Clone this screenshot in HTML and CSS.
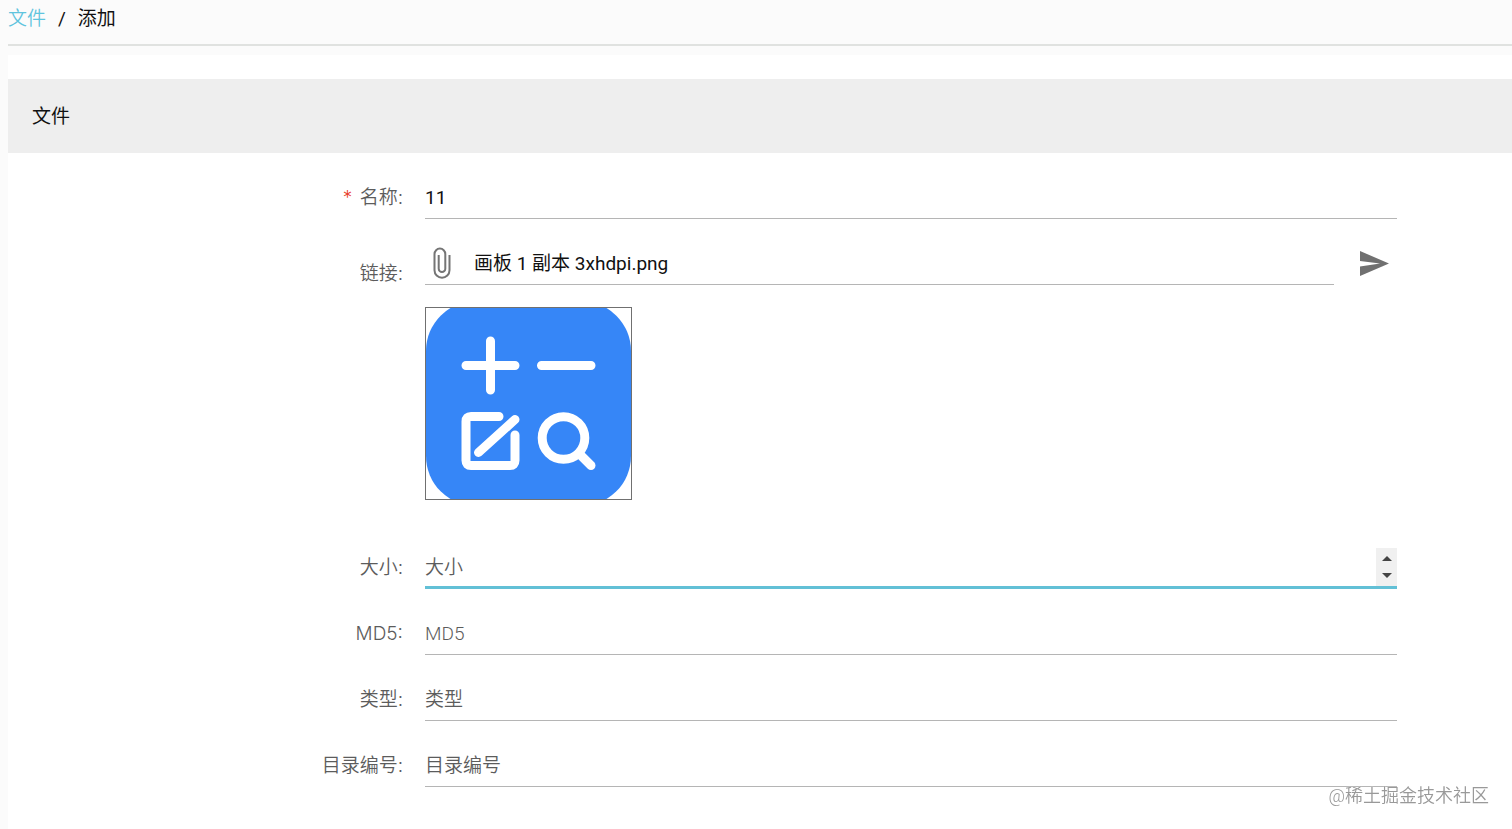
FILE: index.html
```html
<!DOCTYPE html>
<html lang="zh-CN">
<head>
<meta charset="utf-8">
<title>添加文件</title>
<link rel="stylesheet" href="styles.css">
</head>
<body>
<nav class="breadcrumb" aria-label="面包屑">
  <a href="#" class="breadcrumb-link">文件</a>
  <span>/</span>
  <span>添加</span>
</nav>
<main class="card">
  <h1 class="card-title">文件</h1>
  <form class="form">
    <div class="row">
      <label class="label" for="name"><span class="required">*</span> 名称:</label>
      <input class="input" id="name" type="text" value="11">
    </div>
    <div class="row row-file">
      <label class="label" for="link">链接:</label>
      <div>
        <div class="upload">
          <div class="file-field">
            <button class="icon-button" type="button" aria-label="选择文件">
              <svg class="clip" viewBox="0 0 18 32" fill="none" stroke="#757575" stroke-width="2" stroke-linecap="butt"><path d="M16.5 8v15.2a7.5 7.5 0 0 1-15 0V7a5.4 5.4 0 0 1 10.8 0v14.700a3.300 3.300 0 0 1-6.600 0V8"/></svg>
            </button>
            <input class="file-name" id="link" type="text" value="画板 1 副本 3xhdpi.png" readonly>
          </div>
          <button class="icon-button send" type="button" aria-label="上传">
            <svg class="plane" viewBox="0 0 29 25" fill="#707070"><path d="M0 0L29 12.500L0 25V15.500L20 12.500L0 10Z"/></svg>
          </button>
        </div>
        <svg class="preview" viewBox="0 0 205 191" preserveAspectRatio="xMidYMid slice" role="img" aria-label="预览">
          <rect x="0" y="-7" width="205" height="205" rx="50" fill="#3686f7"/>
          <g fill="none" stroke="#fff" stroke-width="9" stroke-linecap="round" stroke-linejoin="round">
            <path d="M40 57.500H89M64.500 33V82M115.500 57.500H165"/>
            <path d="M73 108.500H45Q40 108.500 40 113.500V152.500Q40 157.500 45 157.500H84Q89 157.500 89 152.500V127M52.500 144.500L89 111.500"/>
            <circle cx="137.500" cy="130" r="21.300"/>
            <path d="M153 145.500L165 157.500"/>
          </g>
        </svg>
      </div>
    </div>
    <div class="row">
      <label class="label" for="size">大小:</label>
      <div class="number-field">
        <input class="number-input" id="size" type="number" placeholder="大小">
        <div class="spinner">
          <button class="step" type="button" aria-label="增加"><svg class="arrow" viewBox="0 0 10 5"><path d="M0 5L5 0L10 5Z"/></svg></button>
          <button class="step" type="button" aria-label="减少"><svg class="arrow" viewBox="0 0 10 5"><path d="M0 0L5 5L10 0Z"/></svg></button>
        </div>
      </div>
    </div>
    <div class="row">
      <label class="label" for="md5">MD5:</label>
      <input class="input" id="md5" type="text" placeholder="MD5">
    </div>
    <div class="row">
      <label class="label" for="type">类型:</label>
      <input class="input" id="type" type="text" placeholder="类型">
    </div>
    <div class="row">
      <label class="label" for="catalog">目录编号:</label>
      <input class="input" id="catalog" type="text" placeholder="目录编号">
    </div>
  </form>
</main>
<div class="watermark">@稀土掘金技术社区</div>
</body>
</html>
```
FILE: styles.css
```css
* {
  box-sizing: border-box;
}

body {
  margin: 0;
  padding-left: 8px;
  background: #fbfbfb;
  color: #111;
  font-family: Roboto, "Noto Sans CJK SC", sans-serif;
  font-size: 19px;
  line-height: 28px;
}

input,
button {
  margin: 0;
  padding: 0;
  border: 0;
  border-radius: 0;
  outline: 0;
  background: none;
  color: inherit;
  font: inherit;
}

.breadcrumb {
  display: flex;
  gap: 12px;
  padding: 5px 0 11px;
  border-bottom: 2px solid #e0e2e0;
}

.breadcrumb-link {
  color: #5fc4de;
  font-weight: 350;
  text-decoration: none;
}

.card {
  margin-top: 9px;
  padding: 24px 0 42px;
  background: #fff;
}

.card-title {
  margin: 0;
  padding: 24px 24px 22px;
  background: #eee;
  font-size: 19px;
  font-weight: 400;
  line-height: 28px;
}

.form {
  display: flex;
  flex-direction: column;
  gap: 22px;
  padding: 22px 115px 0 0;
}

.row {
  display: grid;
  grid-template-columns: 395px minmax(0, 1fr);
  column-gap: 22px;
}

.row-file {
  padding-bottom: 23px;
}

.label {
  padding-top: 9px;
  color: #5c5c5c;
  font-family: Inter, "Noto Sans CJK SC", sans-serif;
  font-weight: 350;
  text-align: right;
}

.row-file .label {
  padding-top: 19px;
}

.required {
  margin-right: 2px;
  color: #e8402c;
}

.input,
.number-field,
.file-field {
  width: 100%;
  height: 44px;
  border-bottom: 1px solid #b5b5b5;
}

.input,
.number-input {
  padding-top: 2px;
}

::placeholder {
  color: #5c5c5c;
  font-weight: 350;
  opacity: 1;
}

.upload {
  display: flex;
  gap: 23px;
}

.file-field {
  display: flex;
  flex: 1;
  align-items: center;
}

.icon-button {
  display: flex;
  align-items: center;
  justify-content: center;
  width: 34px;
  height: 44px;
}

.clip {
  width: 18px;
  height: 32px;
}

.file-name {
  flex: 1;
  min-width: 0;
  margin-left: 15px;
  padding-top: 2px;
}

.send {
  justify-content: flex-start;
  width: 40px;
  padding-left: 3px;
}

.send:focus {
  background: #eee;
}

.plane {
  width: 29px;
  height: 25px;
}

.preview {
  display: block;
  width: 207px;
  height: 193px;
  margin-top: 22px;
  border: 1px solid #707070;
}

.number-field {
  display: flex;
  align-items: center;
  border-bottom: 3px solid #62c0d6;
}

.number-input {
  flex: 1;
  min-width: 0;
  padding-top: 4px;
  appearance: textfield;
}

.number-input::-webkit-inner-spin-button {
  appearance: none;
}

.spinner {
  display: flex;
  flex-direction: column;
  align-self: flex-end;
  width: 21px;
  padding: 2px 0;
  background: #f0f0f0;
}

.step {
  display: flex;
  align-items: center;
  justify-content: center;
  height: 17px;
}

.arrow {
  width: 10px;
  height: 5px;
  fill: #444;
}

.watermark {
  position: fixed;
  right: 23px;
  bottom: 19px;
  color: #999;
  font-size: 18px;
  font-weight: 350;
  line-height: 28px;
  text-shadow: 0 0 1px #fff;
}
```
